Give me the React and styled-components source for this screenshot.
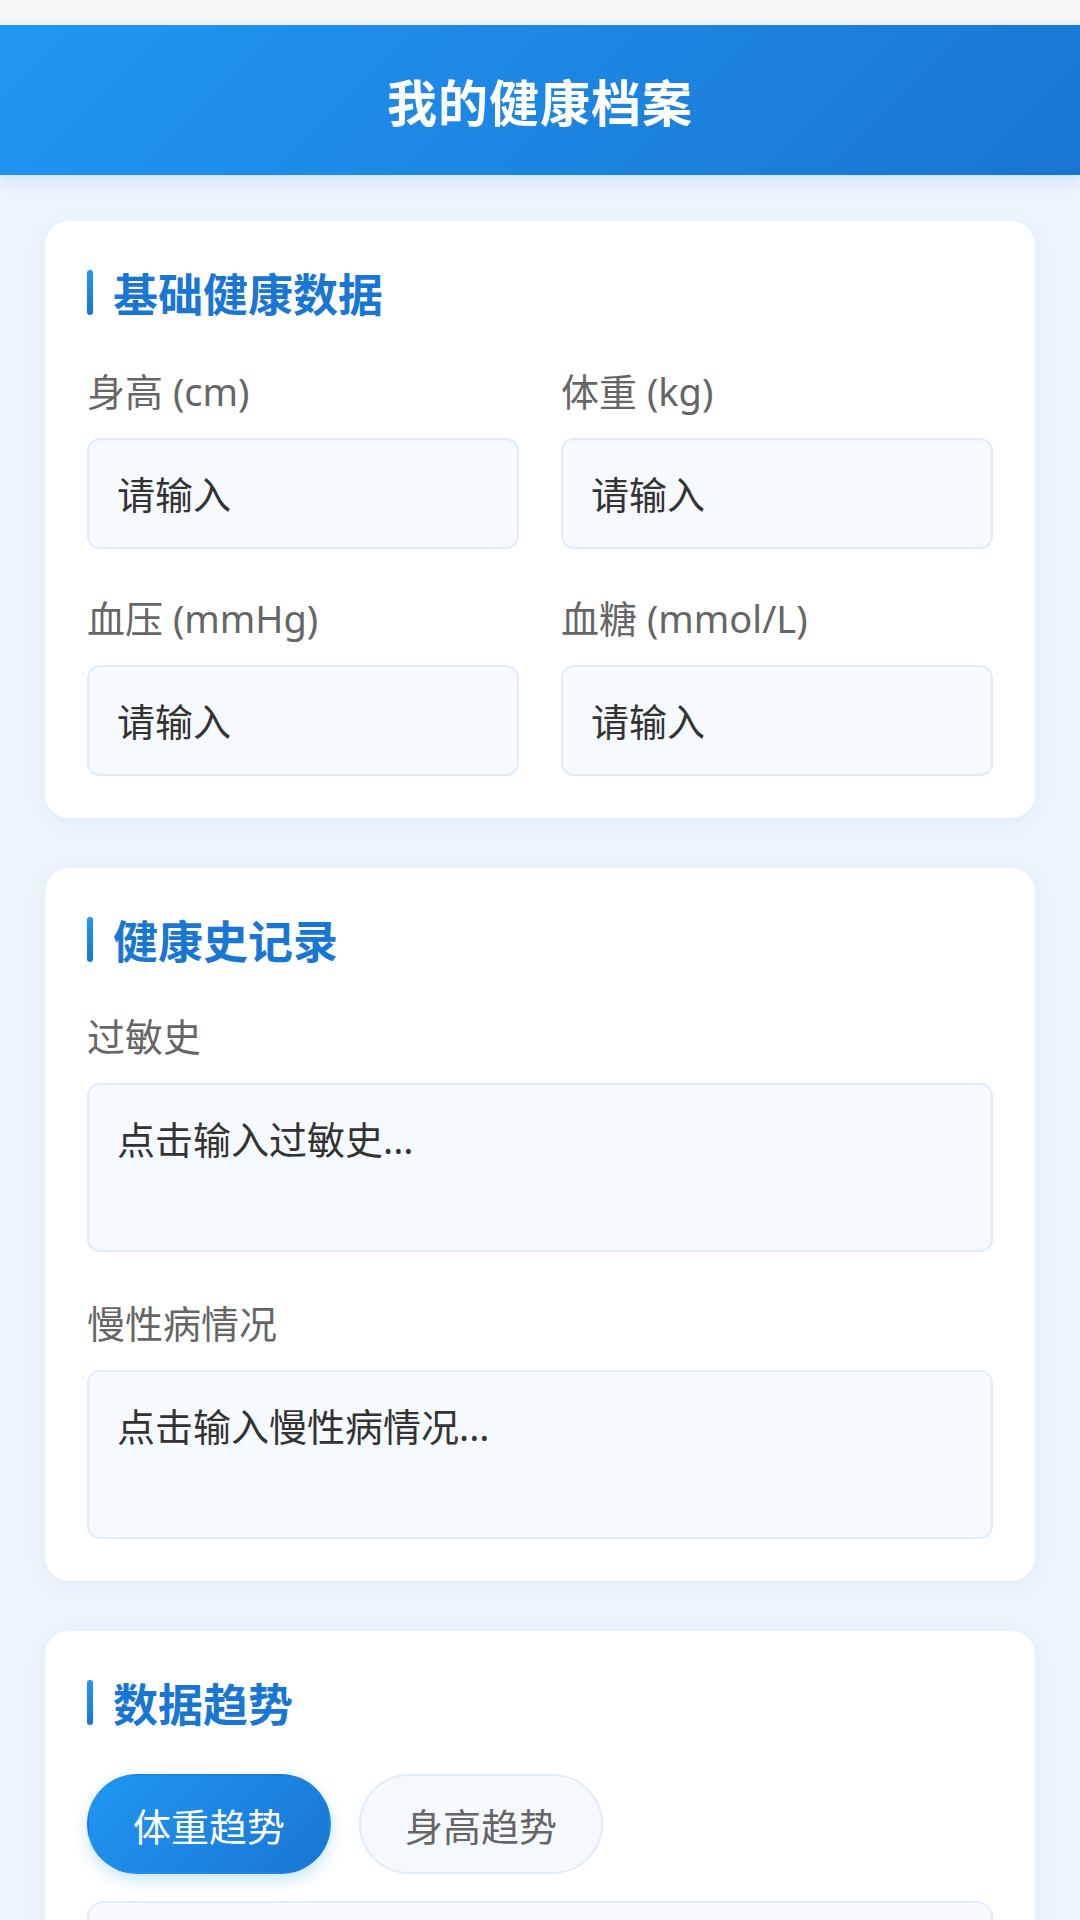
import React, { useState } from 'react'
import styled, { createGlobalStyle } from 'styled-components'

const GlobalStyle = createGlobalStyle`
  html, body {
    margin: 0;
    padding: 0;
    background: #eef4fc;
  }
  body {
    font-family: 'Noto Sans', 'Noto Sans CJK SC', sans-serif;
  }
  * {
    box-sizing: border-box;
  }
`

const Page = styled.div`
  min-height: 1920px;
  background: #eef4fc;
`

const StatusStrip = styled.div`
  height: 25px;
  background: #f7f7f7;
`

const Header = styled.header`
  height: 150px;
  display: flex;
  align-items: center;
  justify-content: center;
  background: linear-gradient(135deg, #2196f3 0%, #1976d2 100%);
  box-shadow: 0 6px 18px rgba(33, 150, 243, 0.18);
`

const Title = styled.h1`
  margin: 0;
  color: #fff;
  font-size: 50px;
  font-weight: 700;
  letter-spacing: 1px;
  font-family: 'Noto Sans CJK SC', sans-serif;
`

const Content = styled.main`
  display: flex;
  flex-direction: column;
  gap: 50px;
  padding: 46px 45px 0;
`

const Card = styled.section`
  background: #fff;
  border-radius: 24px;
  padding: 45px 42px 42px;
  box-shadow: 0 4px 20px rgba(25, 118, 210, 0.07);
`

const SectionTitle = styled.h2`
  display: flex;
  align-items: center;
  gap: 20px;
  margin: 0 0 ${p => p.$gap || 46}px;
  font-size: 45px;
  line-height: 53px;
  font-weight: 700;
  color: #1976d2;
  font-family: 'Noto Sans CJK SC', sans-serif;

  &::before {
    content: '';
    width: 6px;
    height: 45px;
    border-radius: 3px;
    background: linear-gradient(180deg, #2196f3, #1976d2);
  }
`

const Grid = styled.div`
  display: grid;
  grid-template-columns: 1fr 1fr;
  column-gap: 42px;
  row-gap: 43px;
`

const Stack = styled.div`
  display: flex;
  flex-direction: column;
  gap: 45px;
`

const Field = styled.label`
  display: flex;
  flex-direction: column;
`

const Label = styled.span`
  font-size: 38px;
  line-height: 53px;
  color: #666;
  margin-bottom: 20px;
`

const fieldBox = `
  width: 100%;
  border: 2.5px solid #e0ecf9;
  border-radius: 13px;
  background: #f6f9fd;
  font-family: 'Noto Sans', 'Noto Sans CJK SC', sans-serif;
  font-size: 38px;
  color: #333;
  outline: none;
  &::placeholder {
    color: #333;
    opacity: 1;
  }
`

const Input = styled.input`
  ${fieldBox}
  height: 111px;
  padding: 0 28px;
`

const TextArea = styled.textarea`
  ${fieldBox}
  height: 169px;
  padding: 26px 28px;
  line-height: 57px;
  resize: none;
  display: block;
`

const Tabs = styled.div`
  display: flex;
  gap: 28px;
  margin-bottom: 27px;
`

const Tab = styled.button`
  height: 100px;
  padding: 0 44px;
  border-radius: 50px;
  font-size: 38px;
  font-family: 'Noto Sans CJK SC', sans-serif;
  cursor: pointer;
  border: 2.5px solid ${p => (p.$active ? 'transparent' : '#e0ecf9')};
  background: ${p =>
    p.$active ? 'linear-gradient(135deg, #2196f3, #1976d2)' : '#f5f8fd'};
  color: ${p => (p.$active ? '#fff' : '#666')};
  box-shadow: ${p => (p.$active ? '0 6px 16px rgba(33, 150, 243, 0.25)' : 'none')};
`

const ChartBox = styled.div`
  height: 420px;
  border: 2.5px solid #e0ecf9;
  border-radius: 16px;
  background: #f7f9fd;
`

const basics = [
  { label: '身高 (cm)', key: 'height' },
  { label: '体重 (kg)', key: 'weight' },
  { label: '血压 (mmHg)', key: 'bp' },
  { label: '血糖 (mmol/L)', key: 'sugar' },
]

const history = [
  { label: '过敏史', placeholder: '点击输入过敏史...' },
  { label: '慢性病情况', placeholder: '点击输入慢性病情况...' },
]

export default function App() {
  const [tab, setTab] = useState('weight')

  return (
    <Page>
      <GlobalStyle />
      <StatusStrip />
      <Header>
        <Title>我的健康档案</Title>
      </Header>
      <Content>
        <Card>
          <SectionTitle>基础健康数据</SectionTitle>
          <Grid>
            {basics.map(f => (
              <Field key={f.key}>
                <Label>{f.label}</Label>
                <Input type="text" placeholder="请输入" />
              </Field>
            ))}
          </Grid>
        </Card>

        <Card>
          <SectionTitle $gap={44}>健康史记录</SectionTitle>
          <Stack>
            {history.map(h => (
              <Field key={h.label}>
                <Label>{h.label}</Label>
                <TextArea placeholder={h.placeholder} />
              </Field>
            ))}
          </Stack>
        </Card>

        <Card>
          <SectionTitle $gap={45}>数据趋势</SectionTitle>
          <Tabs>
            <Tab $active={tab === 'weight'} onClick={() => setTab('weight')}>
              体重趋势
            </Tab>
            <Tab $active={tab === 'height'} onClick={() => setTab('height')}>
              身高趋势
            </Tab>
          </Tabs>
          <ChartBox />
        </Card>
      </Content>
    </Page>
  )
}
